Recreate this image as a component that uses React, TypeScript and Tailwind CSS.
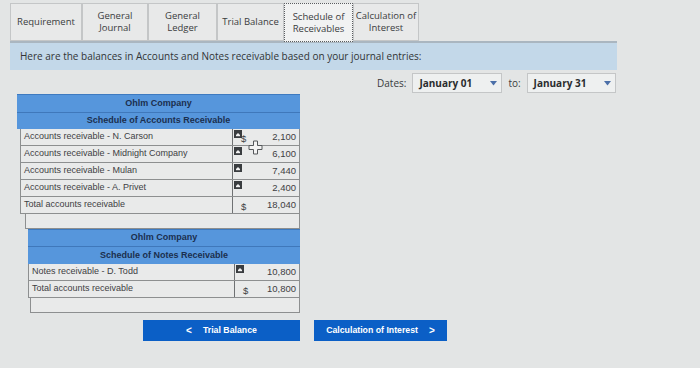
import React from "react";

const tabs = [
  { l1: "Requirement", l2: "", w: 72 },
  { l1: "General", l2: "Journal", w: 66 },
  { l1: "General", l2: "Ledger", w: 69 },
  { l1: "Trial Balance", l2: "", w: 67 },
  { l1: "Schedule of", l2: "Receivables", w: 69, active: true },
  { l1: "Calculation of", l2: "Interest", w: 66 },
];

function Marker() {
  return (
    <span className="inline-flex w-[8px] h-[8px] bg-[#3a3d40] items-center justify-center">
      <svg width="6" height="5" viewBox="0 0 6 5">
        <path d="M1 3 L3 1 L5 3 Z" fill="#f2f2f2" />
        <rect x="1" y="3" width="4" height="1.2" fill="#f2f2f2" />
      </svg>
    </span>
  );
}

function Row({
  label,
  amount,
  dollar,
  marker,
  split,
}: {
  label: string;
  amount: string;
  dollar?: boolean;
  marker?: boolean;
  split: number;
}) {
  return (
    <div className="flex h-[17px] border-b border-[#8d8f90] bg-[#e9eaea]">
      <div
        className="border-r border-[#6f7173] pl-[3px] flex items-center text-[9px] text-[#3e4043] whitespace-nowrap"
        style={{ width: split }}
      >
        {label}
      </div>
      <div className="flex-1 relative flex items-center pr-[3px] text-[9.5px] text-[#3e4043]">
        {marker && (
          <span className="absolute left-[1px] top-[1px] flex">
            <Marker />
          </span>
        )}
        {dollar && <span className="absolute left-[8px] top-[3px]">$</span>}
        <span className="ml-auto">{amount}</span>
      </div>
    </div>
  );
}

export default function App() {
  return (
    <div
      className="w-[700px] h-[368px] overflow-hidden bg-[#e3e5e5] relative"
      style={{ fontFamily: '"Open Sans", "Liberation Sans", sans-serif' }}
    >
      {/* Tabs */}
      <div className="flex pl-[10px] pt-[3px] h-[41px]">
        {tabs.map((t, i) => (
          <div
            key={i}
            className={
              t.active
                ? "h-[39px] border border-dotted border-[#5a5d60] bg-[#f1f2f2] flex flex-col items-center justify-center text-[9.5px] leading-[12px] text-[#3a3c3e] z-10 whitespace-nowrap"
                : "h-[38px] border border-[#c4c6c7] bg-[#e8e9e9] flex flex-col items-center justify-center text-[9.5px] leading-[12px] text-[#3a3c3e] whitespace-nowrap"
            }
            style={{ width: t.w }}
          >
            <div>{t.l1}</div>
            {t.l2 && <div>{t.l2}</div>}
          </div>
        ))}
      </div>

      {/* Info bar */}
      <div className="ml-[10px] w-[607px] h-[29px] bg-[#c3d8e9] border-t-2 border-[#aab6c0] flex items-center pl-[10px] text-[10px] text-[#323436]">
        Here are the balances in Accounts and Notes receivable based on your journal entries:
      </div>

      {/* Dates */}
      <div className="flex items-center h-[20px] mt-[3px] pl-[377px] text-[10px] text-[#3a3c3e]">
        <span className="mr-[6px]">Dates:</span>
        <div className="w-[90px] h-[20px] border border-[#c4c6c7] bg-[#eef0f0] flex items-center pl-[6px] pr-[4px]">
          <span className="font-bold text-[#2a2c2e]">January 01</span>
          <svg className="ml-auto" width="7" height="5" viewBox="0 0 7 5">
            <path d="M0 0 H7 L3.5 4.5 Z" fill="#4b6fa8" />
          </svg>
        </div>
        <span className="ml-[6px] mr-[6px]">to:</span>
        <div className="w-[89px] h-[20px] border border-[#c4c6c7] bg-[#eef0f0] flex items-center pl-[6px] pr-[4px]">
          <span className="font-bold text-[#2a2c2e]">January 31</span>
          <svg className="ml-auto" width="7" height="5" viewBox="0 0 7 5">
            <path d="M0 0 H7 L3.5 4.5 Z" fill="#4b6fa8" />
          </svg>
        </div>
      </div>

      {/* Tables */}
      <div
        className="relative"
        style={{ fontFamily: '"Liberation Sans", Arial, sans-serif' }}
      >
        <div className="ml-[17px] mt-[1px] w-[283px]">
          <div className="bg-[#5696dc] border-t border-[#3e7ac0]">
            <div className="h-[18px] flex items-center justify-center text-[9px] font-bold text-[#1b2f4e] border-b border-[#3f78bb]">
              Ohlm Company
            </div>
            <div className="h-[16px] flex items-center justify-center text-[9px] font-bold text-[#1b2f4e]">
              Schedule of Accounts Receivable
            </div>
          </div>
          <div className="ml-[3px] border-l border-r border-[#8d8f90]">
            <Row label="Accounts receivable - N. Carson" amount="2,100" dollar marker split={212} />
            <Row label="Accounts receivable - Midnight Company" amount="6,100" marker split={212} />
            <Row label="Accounts receivable - Mulan" amount="7,440" marker split={212} />
            <Row label="Accounts receivable - A. Privet" amount="2,400" marker split={212} />
            <Row label="Total accounts receivable" amount="18,040" dollar split={212} />
          </div>
          <div className="ml-[8px] h-[15px] border-l border-r border-b border-[#8d8f90] bg-[#e9eaea]" />
        </div>

        <div className="ml-[28px] w-[272px]">
          <div className="bg-[#5696dc] border-t border-[#3e7ac0]">
            <div className="h-[17px] flex items-center justify-center text-[9px] font-bold text-[#1b2f4e] border-b border-[#3f78bb]">
              Ohlm Company
            </div>
            <div className="h-[17px] flex items-center justify-center text-[9px] font-bold text-[#1b2f4e]">
              Schedule of Notes Receivable
            </div>
          </div>
          <div className="border-l border-r border-[#8d8f90]">
            <Row label="Notes receivable - D. Todd" amount="10,800" marker split={206} />
            <Row label="Total accounts receivable" amount="10,800" dollar split={206} />
          </div>
          <div className="ml-[2px] h-[15px] border-l border-r border-b border-[#8d8f90] bg-[#e9eaea]" />
        </div>

        {/* cursor */}
        <svg
          className="absolute left-[248px] top-[46px]"
          width="15"
          height="15"
          viewBox="0 0 15 15"
        >
          <path
            d="M5.5 1 H9.5 V5.5 H14 V9.5 H9.5 V14 H5.5 V9.5 H1 V5.5 H5.5 Z"
            fill="#f4f4f4"
            stroke="#55585b"
            strokeWidth="1"
          />
        </svg>

        {/* Buttons */}
        <div className="flex mt-[7px]">
          <div className="ml-[143px] w-[157px] h-[21px] bg-[#0b5fc6] flex items-center justify-center text-white text-[8.75px] font-bold">
            <span className="mr-[11px] text-[10px]">&lt;</span>
            Trial Balance
          </div>
          <div className="ml-[14px] w-[133px] h-[21px] bg-[#0b5fc6] flex items-center justify-center text-white text-[8.75px] font-bold">
            Calculation of Interest
            <span className="ml-[11px] text-[10px]">&gt;</span>
          </div>
        </div>
      </div>
    </div>
  );
}
